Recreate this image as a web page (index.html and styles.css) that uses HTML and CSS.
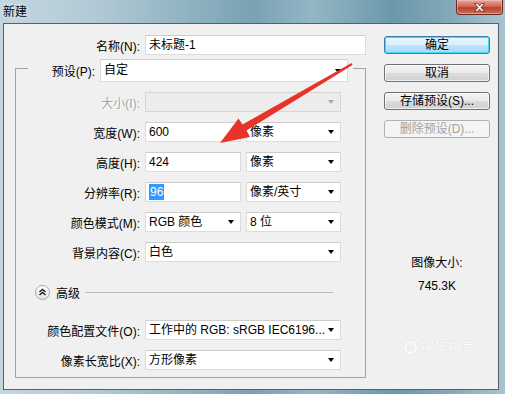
FILE: index.html
```html
<!DOCTYPE html>
<html lang="zh-CN">
<head>
  <meta charset="UTF-8" />
  <title>新建</title>
  <link rel="stylesheet" href="styles.css">
</head>
<body>
  <div class="window">
    <div class="titlebar">
      <span class="title">新建</span>
      <span class="close">
        <svg width="11" height="9" viewBox="0 0 11 9">
          <path d="M0.5 0.5 H3.5 L5.5 3 L7.5 0.5 H10.5 L7 4.5 L10.5 8.5 H7.5 L5.5 6 L3.5 8.5 H0.5 L4 4.5 Z" fill="#fff" stroke="#6b2a22" stroke-width="0.8"/>
        </svg>
      </span>
    </div>

    <div class="client">
      <div class="form">
        <div class="name-row">
          <span class="label">名称(N):</span>
          <div class="field name">未标题-1</div>
        </div>

        <div class="group">
          <div class="preset-row">
            <span class="label">预设(P):</span>
            <div class="field combo preset">自定<span class="caret"></span></div>
          </div>

          <div class="row">
            <span class="label disabled">大小(I):</span>
            <div class="field combo full off"><span class="caret"></span></div>
          </div>
          <div class="row">
            <span class="label">宽度(W):</span>
            <div class="field half">600</div>
            <div class="field combo unit">像素<span class="caret"></span></div>
          </div>
          <div class="row">
            <span class="label">高度(H):</span>
            <div class="field half">424</div>
            <div class="field combo unit">像素<span class="caret"></span></div>
          </div>
          <div class="row">
            <span class="label">分辨率(R):</span>
            <div class="field half"><span class="selected">96</span></div>
            <div class="field combo unit">像素/英寸<span class="caret"></span></div>
          </div>
          <div class="row">
            <span class="label">颜色模式(M):</span>
            <div class="field combo half">RGB 颜色<span class="caret"></span></div>
            <div class="field combo unit">8 位<span class="caret"></span></div>
          </div>
          <div class="row">
            <span class="label">背景内容(C):</span>
            <div class="field combo full">白色<span class="caret"></span></div>
          </div>

          <div class="advanced">
            <span class="expander">
              <svg width="13" height="13" viewBox="0 0 13 13">
                <path d="M3.5 6 L6.5 3.5 L9.5 6 M3.5 9 L6.5 6.5 L9.5 9" fill="none" stroke="#222" stroke-width="1.5"/>
              </svg>
            </span>
            <span class="adv-text">高级</span>
            <span class="adv-line"></span>
          </div>

          <div class="row profile">
            <span class="label">颜色配置文件(O):</span>
            <div class="field combo full">工作中的 RGB: sRGB IEC6196...<span class="caret"></span></div>
          </div>
          <div class="row">
            <span class="label">像素长宽比(X):</span>
            <div class="field combo full">方形像素<span class="caret"></span></div>
          </div>
        </div>
      </div>

      <div class="side">
        <div class="btn default">确定</div>
        <div class="btn">取消</div>
        <div class="btn">存储预设(S)...</div>
        <div class="btn off">删除预设(D)...</div>
        <div class="img-size">
          <div>图像大小:</div>
          <div class="img-value">745.3K</div>
        </div>
      </div>
    </div>

    <div class="watermark">
      <div class="wm-main"><span class="wm-logo">S</span>搜狗指南</div>
      <div class="wm-sub">zhinan.sogou.com</div>
    </div>

    <svg class="arrow" width="505" height="394" viewBox="0 0 505 394">
      <polygon points="220,143 238.5,118.5 242.5,124.5 351.5,63 352.5,65 246.5,130.5 250,137" fill="#e8332b"/>
    </svg>
  </div>
</body>
</html>
```

FILE: styles.css
```css
* {
  box-sizing: border-box;
}
body {
  margin: 0;
  font-family: "Liberation Sans", "Noto Sans CJK SC", sans-serif;
  font-size: 12px;
  color: #000;
}

.window {
  position: relative;
  width: 505px;
  height: 394px;
  padding: 0 6px 4px 3px;
  display: flex;
  flex-direction: column;
  overflow: hidden;
  background: linear-gradient(to right, #c3d6df 0%, #b3cbd6 18%, #8fb2c1 38%, #7aa2b3 50%, #93b6c4 62%, #6a98aa 78%, #86aab9 90%, #aac4cf 100%);
}

.titlebar {
  height: 23px;
  display: flex;
  justify-content: space-between;
  align-items: flex-start;
}
.title {
  margin-top: 4px;
  line-height: 16px;
  text-shadow: 0 0 5px rgba(255, 255, 255, 0.9);
}
.close {
  width: 47px;
  height: 15px;
  margin-right: -4px;
  display: flex;
  align-items: center;
  justify-content: center;
  border: 1px solid #6a2a22;
  border-top: none;
  border-radius: 0 0 4px 4px;
  background: linear-gradient(#e9a99b, #d0685a 45%, #b8402f 55%, #d0705a);
  box-shadow: inset 0 0 0 1px rgba(255, 200, 190, 0.5);
}

.client {
  flex: 1;
  display: flex;
  padding-top: 11px;
  background: #f0f0f0;
  border: 1px solid #52626d;
}

.form {
  width: 362px;
}

.label {
  text-align: right;
  white-space: nowrap;
}
.label.disabled {
  color: #a6a6a6;
  text-shadow: 1px 1px 0 #fff;
}

.field {
  height: 20px;
  padding: 0 3px;
  line-height: 18px;
  background: #fff;
  border: 1px solid #dcdcdc;
  border-top-color: #cdcdcd;
  white-space: nowrap;
  overflow: hidden;
}
.combo {
  display: flex;
  align-items: center;
  padding-right: 6px;
}
.caret {
  margin-left: auto;
  width: 0;
  height: 0;
  border-top: 4px solid #000;
  border-left: 3.5px solid transparent;
  border-right: 3.5px solid transparent;
}
.combo.off {
  background: #ececec;
  border-color: #d6d6d6;
}
.combo.off .caret {
  border-top-color: #a8a8a8;
}

.name-row {
  display: flex;
  align-items: center;
  height: 20px;
}
.name-row .label {
  width: 136px;
}
.name-row .field {
  width: 221px;
  margin-left: 5px;
}

.group {
  width: 351px;
  margin: 13px 0 0 11px;
  padding-bottom: 7px;
  border: 1px solid #a3a3a3;
}

.preset-row {
  display: flex;
  align-items: center;
  height: 23px;
  margin: -10px 12px 0 12px;
  padding-right: 5px;
  background: #f0f0f0;
}
.preset-row .label {
  flex: 1;
  margin-right: 5px;
}
.preset {
  width: 248px;
  height: 23px;
  line-height: 21px;
}

.row {
  display: flex;
  align-items: center;
  height: 20px;
  margin-top: 10px;
}
.row .label {
  width: 124px;
  margin-right: 5px;
}
.full {
  width: 196px;
}
.half {
  width: 96px;
}
.unit {
  width: 95px;
  margin-left: 5px;
}
.selected {
  background: #3399ff;
  color: #fff;
  padding: 1px 1px;
}

.advanced {
  display: flex;
  align-items: center;
  height: 15px;
  margin: 23px 32px 0 19px;
}
.expander {
  width: 15px;
  height: 15px;
  display: flex;
  align-items: center;
  justify-content: center;
  border: 1px solid #a8a8a8;
  border-radius: 50%;
  background: linear-gradient(#ffffff, #e4e4e4);
}
.adv-text {
  margin-left: 6px;
  font-size: 12px;
}
.adv-line {
  flex: 1;
  height: 1px;
  margin-left: 5px;
  background: #bdbdbd;
}
.row.profile {
  margin-top: 20px;
}

.side {
  width: 106px;
  margin-left: 18px;
  padding-top: 1px;
  display: flex;
  flex-direction: column;
}
.btn {
  height: 18px;
  line-height: 16px;
  text-align: center;
  border: 1px solid #707070;
  border-radius: 3px;
  background: linear-gradient(#f2f2f2, #ebebeb 50%, #dddddd 50%, #cfcfcf);
  box-shadow: inset 0 0 0 1px rgba(255, 255, 255, 0.7);
}
.btn + .btn {
  margin-top: 10px;
}
.btn.default {
  border-color: #3c7fb1;
  background: linear-gradient(#eaf6fd, #d9f0fc 50%, #bee6fd 50%, #a7d9f5);
  box-shadow: inset 0 0 0 1px #48d6f8;
}
.btn.off {
  color: #a2a2a2;
  border-color: #adb2b5;
  background: #f4f4f4;
  box-shadow: none;
}

.img-size {
  margin-top: 117px;
  text-align: center;
  line-height: 16px;
}
.img-value {
  margin-top: 7px;
}

.watermark {
  position: absolute;
  left: 404px;
  top: 339px;
  color: #fbfbfb;
  text-shadow: 0 0 1px #d2d2d2;
  pointer-events: none;
}
.wm-main {
  display: flex;
  align-items: center;
  font-size: 14px;
  line-height: 16px;
}
.wm-logo {
  width: 13px;
  height: 13px;
  margin-right: 3px;
  border-radius: 50%;
  border: 2px solid #fbfbfb;
  box-shadow: 0 0 1px #d2d2d2;
  font-size: 9px;
  line-height: 9px;
  font-weight: bold;
  text-align: center;
}
.wm-sub {
  margin-top: 3px;
  font-size: 7px;
  line-height: 8px;
  letter-spacing: 0.6px;
}

.arrow {
  position: absolute;
  left: 0;
  top: 0;
  pointer-events: none;
}
```
